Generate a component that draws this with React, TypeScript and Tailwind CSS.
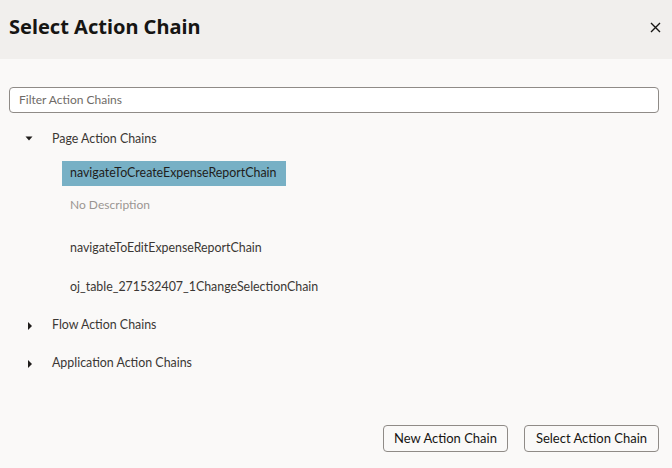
import React from "react";

const font = { fontFamily: "Lato, 'Noto Sans', sans-serif" };

function Caret({ open }: { open: boolean }) {
  return (
    <span className="w-[52px] pl-[24px] flex items-center shrink-0">
      {open ? (
        <svg width="10" height="6" viewBox="0 0 10 6">
          <path d="M1.5 0.5 L8.5 0.5 L5 4.5 Z" fill="#1f1d1b" />
        </svg>
      ) : (
        <svg width="10" height="10" viewBox="0 0 10 10" className="ml-[2px]">
          <path d="M2 1 L6 5 L2 9 Z" fill="#1f1d1b" />
        </svg>
      )}
    </span>
  );
}

function Group({ label, open }: { label: string; open: boolean }) {
  return (
    <div className="h-[38px] flex items-center text-[12.4px] text-[#3a3734]">
      <Caret open={open} />
      <span>{label}</span>
    </div>
  );
}

function Item({ label }: { label: string }) {
  return (
    <div className="h-[39px] flex items-center pl-[70px] text-[12.4px] text-[#3a3734]">
      {label}
    </div>
  );
}

export default function App() {
  return (
    <div className="w-[672px] h-[468px] bg-[#faf9f8] flex flex-col" style={font}>
      <div className="h-[59px] bg-[#f1efed] flex items-center justify-between pl-[9px] pr-[11px] shrink-0">
        <h1
          className="text-[20px] font-bold text-[#161513] -mt-[6px]"
          style={{ fontFamily: "'Noto Sans', sans-serif" }}
        >
          Select Action Chain
        </h1>
        <svg width="11" height="11" viewBox="0 0 11 11" className="-mt-[4px]">
          <path d="M1 1 L10 10 M10 1 L1 10" stroke="#161513" strokeWidth="1.4" />
        </svg>
      </div>

      <div className="flex-1 flex flex-col pl-[9px] pr-[13px] pt-[28px]">
        <div className="h-[26px] border border-[#8f8b87] rounded-[4px] bg-white flex items-center px-[9px] text-[12px] text-[#6f6b67]">
          Filter Action Chains
        </div>

        <div className="mt-[7px] -ml-[9px]">
          <Group label="Page Action Chains" open />
          <div className="h-[70.5px] pl-[62px] pt-[3px]">
            <div className="h-[25px] w-[224px] bg-[#77b0c5] flex items-center pl-[8px] text-[12.4px] text-[#1f1d1b]">
              navigateToCreateExpenseReportChain
            </div>
            <div className="mt-[9px] h-[20px] leading-[20px] pl-[8px] text-[12px] text-[#9a9692]">
              No Description
            </div>
          </div>
          <Item label="navigateToEditExpenseReportChain" />
          <Item label="oj_table_271532407_1ChangeSelectionChain" />
          <Group label="Flow Action Chains" open={false} />
          <Group label="Application Action Chains" open={false} />
        </div>

        <div className="mt-auto mb-[16px] flex justify-end gap-[16px]">
          <button className="h-[27px] w-[125px] border border-[#8f8b87] rounded-[4px] text-[13px] text-[#161513]">
            New Action Chain
          </button>
          <button className="h-[27px] w-[135px] border border-[#8f8b87] rounded-[4px] text-[13px] text-[#161513]">
            Select Action Chain
          </button>
        </div>
      </div>
    </div>
  );
}
